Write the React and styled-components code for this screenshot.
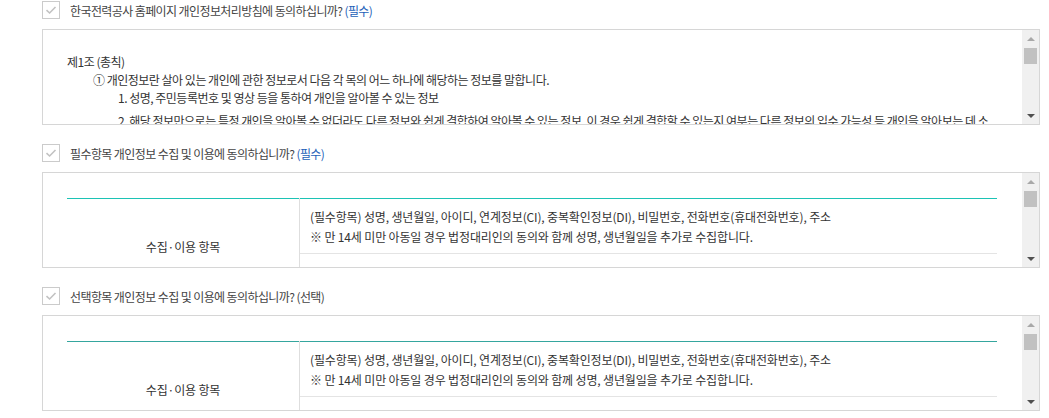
import React from "react";
import styled, { createGlobalStyle } from "styled-components";

const GlobalStyle = createGlobalStyle`
    body {
        margin: 0;
        background: #fff;
        font-family: "Noto Sans CJK KR", "Noto Sans", sans-serif;
        color: #333;
    }
`;

const Page = styled.div`
    width: 998px;
    padding: 1px 0 0 42px;
`;

const Section = styled.section`
    margin-bottom: 19px;
`;

const Header = styled.label`
    display: flex;
    align-items: center;
    gap: 10px;
    height: 18px;
    margin-bottom: 10px;
`;

const CheckBox = styled.span`
    width: 18px;
    height: 18px;
    box-sizing: border-box;
    border: 1px solid #cbcbcb;
    background: #fff;
    display: flex;
    align-items: center;
    justify-content: center;
`;

const LabelText = styled.span`
    font-size: 12px;
    letter-spacing: -0.6px;
    color: #444;
`;

const Badge = styled.span`
    color: ${props => props.$required ? '#2461b8' : '#444'};
`;

const TermBox = styled.div`
    display: flex;
    height: 96px;
    box-sizing: border-box;
    border: 1px solid #d6d6d6;
`;

const ScrollContent = styled.div`
    flex: 1;
    overflow: hidden;
    padding: ${props => props.$top}px 25px 0 24px;
`;

const Scrollbar = styled.div`
    width: 17px;
    background: #f0f0f0;
    display: flex;
    flex-direction: column;
`;

const ScrollButton = styled.span`
    height: 17px;
    display: flex;
    align-items: center;
    justify-content: center;
    &::before {
        content: "";
        border-left: 4px solid transparent;
        border-right: 4px solid transparent;
        ${props => props.$up
            ? 'border-bottom: 4px solid #a8a8a8;'
            : 'border-top: 4px solid #505050;'}
    }
`;

const ScrollTrack = styled.div`
    flex: 1;
    padding: 1px 2px;
`;

const Thumb = styled.div`
    height: 16px;
    background: #c1c1c1;
`;

const Article = styled.div`
    font-size: 12px;
    letter-spacing: -0.5px;
    line-height: 18px;
    color: #333;
`;

const Clause = styled.p`
    margin: 0 0 0 26px;
`;

const Item = styled.p`
    margin: ${props => props.$gap}px 0 0 51px;
`;

const Table = styled.table`
    width: 100%;
    border-collapse: collapse;
    border-top: 1px solid ${props => props.$line};
    font-size: 12px;
    letter-spacing: -0.15px;
    color: #333;
`;

const Th = styled.th`
    width: 25%;
    font-weight: normal;
    text-align: center;
    vertical-align: middle;
    border-right: 1px solid #dedede;
    padding: 0;
`;

const Td = styled.td`
    padding: 8px 10px 6px;
    line-height: 20px;
    height: ${props => props.$h}px;
    box-sizing: border-box;
    border-bottom: ${props => props.$last ? 'none' : '1px solid #e4e4e4'};
`;

function Check() {
    return (
        <svg width="12" height="10" viewBox="0 0 12 10">
            <path d="M1.5 5.2 L4.6 8 L10.5 2" fill="none" stroke="#c2c2c2" strokeWidth="1.6" />
        </svg>
    );
}

function Box({ top, children }) {
    return (
        <TermBox>
            <ScrollContent $top={top}>{children}</ScrollContent>
            <Scrollbar>
                <ScrollButton $up />
                <ScrollTrack><Thumb /></ScrollTrack>
                <ScrollButton />
            </Scrollbar>
        </TermBox>
    );
}

function AgreeRow({ text, badge, required }) {
    return (
        <Header>
            <CheckBox><Check /></CheckBox>
            <LabelText>{text} <Badge $required={required}>{badge}</Badge></LabelText>
        </Header>
    );
}

function CollectTable({ line }) {
    return (
        <Table $line={line}>
            <tbody>
                <tr>
                    <Th rowSpan={2}>수집·이용 항목</Th>
                    <Td $h={55}>
                        (필수항목) 성명, 생년월일, 아이디, 연계정보(CI), 중복확인정보(DI), 비밀번호, 전화번호(휴대전화번호), 주소<br />
                        ※ 만 14세 미만 아동일 경우 법정대리인의 동의와 함께 성명, 생년월일을 추가로 수집합니다.
                    </Td>
                </tr>
                <tr>
                    <Td $h={40} $last />
                </tr>
            </tbody>
        </Table>
    );
}

export default function App() {
    return (
        <>
            <GlobalStyle />
            <Page>
                <Section>
                    <AgreeRow text="한국전력공사 홈페이지 개인정보처리방침에 동의하십니까?" badge="(필수)" required />
                    <Box top={23}>
                        <Article>
                            <div>제1조 (총칙)</div>
                            <Clause>① 개인정보란 살아 있는 개인에 관한 정보로서 다음 각 목의 어느 하나에 해당하는 정보를 말합니다.</Clause>
                            <Item $gap={0}>1. 성명, 주민등록번호 및 영상 등을 통하여 개인을 알아볼 수 있는 정보</Item>
                            <Item $gap={5}>2. 해당 정보만으로는 특정 개인을 알아볼 수 없더라도 다른 정보와 쉽게 결합하여 알아볼 수 있는 정보. 이 경우 쉽게 결합할 수 있는지 여부는 다른 정보의 입수 가능성 등 개인을 알아보는 데 소요되는 시간, 비용, 기술 등을 합리적으로 고려하여야 합니다.</Item>
                        </Article>
                    </Box>
                </Section>
                <Section>
                    <AgreeRow text="필수항목 개인정보 수집 및 이용에 동의하십니까?" badge="(필수)" required />
                    <Box top={25}>
                        <CollectTable line="#1cc3b5" />
                    </Box>
                </Section>
                <Section>
                    <AgreeRow text="선택항목 개인정보 수집 및 이용에 동의하십니까?" badge="(선택)" />
                    <Box top={25}>
                        <CollectTable line="#35a69e" />
                    </Box>
                </Section>
            </Page>
        </>
    );
}
